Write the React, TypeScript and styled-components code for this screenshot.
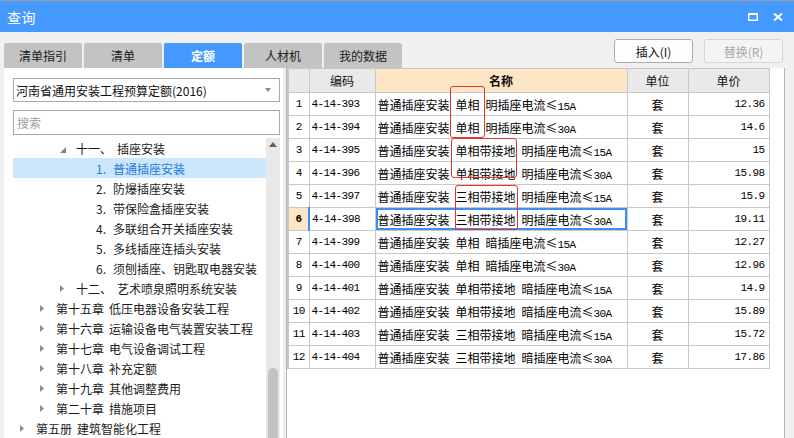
import React from 'react';
import styled, { createGlobalStyle } from 'styled-components';

const GlobalStyle = createGlobalStyle`
  html, body {
    margin: 0;
    padding: 0;
    background: #f0f0f0;
  }
  body {
    font-family: "Noto Sans CJK SC", "Liberation Sans", sans-serif;
    font-size: 12px;
    color: #000;
  }
`;

const MONO = '"Liberation Mono", "Noto Sans CJK SC", monospace';

type TreeNode = {
  level: number;
  kind: 'open' | 'closed' | 'leaf';
  label: string;
  name: string;
  selected?: boolean;
};

type Quota = {
  code: string;
  phase: string;
  mount: string;
  amp: string;
  price: string;
};

const tabs = ['清单指引', '清单', '定额', '人材机', '我的数据'];

const treeItems: TreeNode[] = [
  { level: 2, kind: 'open', label: '十一、', name: '插座安装' },
  { level: 3, kind: 'leaf', label: '1.', name: '普通插座安装', selected: true },
  { level: 3, kind: 'leaf', label: '2.', name: '防爆插座安装' },
  { level: 3, kind: 'leaf', label: '3.', name: '带保险盒插座安装' },
  { level: 3, kind: 'leaf', label: '4.', name: '多联组合开关插座安装' },
  { level: 3, kind: 'leaf', label: '5.', name: '多线插座连插头安装' },
  { level: 3, kind: 'leaf', label: '6.', name: '须刨插座、钥匙取电器安装' },
  { level: 2, kind: 'closed', label: '十二、', name: '艺术喷泉照明系统安装' },
  { level: 1, kind: 'closed', label: '第十五章', name: '低压电器设备安装工程' },
  { level: 1, kind: 'closed', label: '第十六章', name: '运输设备电气装置安装工程' },
  { level: 1, kind: 'closed', label: '第十七章', name: '电气设备调试工程' },
  { level: 1, kind: 'closed', label: '第十八章', name: '补充定额' },
  { level: 1, kind: 'closed', label: '第十九章', name: '其他调整费用' },
  { level: 1, kind: 'closed', label: '第二十章', name: '措施项目' },
  { level: 0, kind: 'closed', label: '第五册', name: '建筑智能化工程' }
];

const quotas: Quota[] = [
  { code: '4-14-393', phase: '单相', mount: '明', amp: '15A', price: '12.36' },
  { code: '4-14-394', phase: '单相', mount: '明', amp: '30A', price: '14.6' },
  { code: '4-14-395', phase: '单相带接地', mount: '明', amp: '15A', price: '15' },
  { code: '4-14-396', phase: '单相带接地', mount: '明', amp: '30A', price: '15.98' },
  { code: '4-14-397', phase: '三相带接地', mount: '明', amp: '15A', price: '15.9' },
  { code: '4-14-398', phase: '三相带接地', mount: '明', amp: '30A', price: '19.11' },
  { code: '4-14-399', phase: '单相', mount: '暗', amp: '15A', price: '12.27' },
  { code: '4-14-400', phase: '单相', mount: '暗', amp: '30A', price: '12.96' },
  { code: '4-14-401', phase: '单相带接地', mount: '暗', amp: '15A', price: '14.9' },
  { code: '4-14-402', phase: '单相带接地', mount: '暗', amp: '30A', price: '15.89' },
  { code: '4-14-403', phase: '三相带接地', mount: '暗', amp: '15A', price: '15.72' },
  { code: '4-14-404', phase: '三相带接地', mount: '暗', amp: '30A', price: '17.86' }
];

// red annotation boxes drawn over the grid (relative to the grid's top-left)
const marks = [
  { left: 163, top: 18, width: 35, height: 52 },
  { left: 164, top: 70, width: 66, height: 40 },
  { left: 168, top: 117, width: 63, height: 45 }
];

const Window = styled.div`
  width: 794px;
  height: 438px;
  box-sizing: border-box;
  border-top: 1px solid #9c9c9c;
  background: #f0f0f0;
  display: flex;
  flex-direction: column;
  overflow: hidden;
`;

const TitleBar = styled.div`
  flex: none;
  height: 31px;
  background: #4499ff;
  color: #fff;
  display: flex;
  align-items: center;
  justify-content: space-between;
  padding: 0 11px 0 7px;
`;

const Title = styled.span`
  font-size: 14px;
  letter-spacing: 0.5px;
`;

const WinControls = styled.div`
  display: flex;
  align-items: center;
  gap: 15px;
  padding-top: 1px;
`;

const Toolbar = styled.div`
  flex: none;
  height: 36px;
  display: flex;
  justify-content: space-between;
  padding: 0 11px 0 4px;
`;

const Tabs = styled.div`
  display: flex;
  align-self: flex-end;
  gap: 2px;
`;

const Tab = styled.div<{ $active?: boolean }>`
  width: 78px;
  height: 25px;
  box-sizing: border-box;
  display: flex;
  align-items: center;
  justify-content: center;
  border-radius: 2px 2px 0 0;
  background: ${p => (p.$active ? '#4499ff' : '#c3c3c3')};
  color: ${p => (p.$active ? '#fff' : '#1a1a1a')};
  font-weight: ${p => (p.$active ? 700 : 400)};
  font-size: 12px;
`;

const Actions = styled.div`
  display: flex;
  gap: 11px;
  padding-top: 7px;
`;

const Button = styled.div<{ $disabled?: boolean }>`
  width: 79px;
  height: 24px;
  box-sizing: border-box;
  display: flex;
  align-items: center;
  justify-content: center;
  border-radius: 3px;
  border: 1px solid ${p => (p.$disabled ? '#d6d6d6' : '#adadad')};
  background: ${p => (p.$disabled ? '#f4f4f4' : '#fdfdfd')};
  color: ${p => (p.$disabled ? '#a8a8a8' : '#111')};
  font-size: 12px;
`;

const Body = styled.div`
  flex: 1;
  min-height: 0;
  display: flex;
  gap: 3px;
  padding: 0 9px 0 4px;
`;

const LeftPanel = styled.div`
  width: 279px;
  flex: none;
  box-sizing: border-box;
  background: #fff;
  padding: 10px 3px 0 9px;
  display: flex;
  flex-direction: column;
`;

const Select = styled.div`
  height: 24px;
  box-sizing: border-box;
  border: 1px solid #a9a9a9;
  display: flex;
  align-items: center;
  justify-content: space-between;
  padding: 0 8px 0 2px;
  color: #111;
`;

const SelectArrow = styled.span`
  width: 0;
  height: 0;
  border-left: 3.5px solid transparent;
  border-right: 3.5px solid transparent;
  border-top: 4px solid #8a8a8a;
`;

const Search = styled.div`
  margin-top: 8px;
  height: 25px;
  box-sizing: border-box;
  border: 1px solid #a9a9a9;
  display: flex;
  align-items: center;
  padding-left: 3px;
  color: #a0a0a0;
`;

const TreeArea = styled.div`
  flex: 1;
  min-height: 0;
  margin-top: 3px;
  display: flex;
`;

const TreeList = styled.div`
  flex: 1;
  display: flex;
  flex-direction: column;
`;

const TreeRow = styled.div<{ $level: number; $selected?: boolean }>`
  height: 20px;
  flex: none;
  display: flex;
  align-items: center;
  padding-left: ${p => 7 + p.$level * 20}px;
  background: ${p => (p.$selected ? '#cce6fc' : 'transparent')};
  color: ${p => (p.$selected ? '#1f7ae0' : '#1a1a1a')};
  white-space: nowrap;
`;

const Toggle = styled.span`
  width: 16px;
  flex: none;
  display: flex;
  align-items: center;
`;

const NodeLabel = styled.span<{ $leaf?: boolean }>`
  ${p => (p.$leaf ? 'width: 17px;' : 'margin-right: 5px;')}
  flex: none;
`;

const ScrollBar = styled.div`
  width: 14px;
  flex: none;
  background: #e8e8e8;
  display: flex;
  flex-direction: column;
  align-items: center;
`;

const ScrollArrow = styled.span`
  margin-top: 4px;
  width: 0;
  height: 0;
  border-left: 4px solid transparent;
  border-right: 4px solid transparent;
  border-bottom: 5px solid #606060;
`;

const ScrollTrack = styled.div`
  flex: 1;
  width: 100%;
  display: flex;
  flex-direction: column;
  justify-content: flex-end;
  align-items: center;
`;

const ScrollThumb = styled.div`
  width: 10px;
  height: 72px;
  margin-bottom: -2px;
  border-radius: 5px 5px 0 0;
  background: #c2c2c2;
`;

const RightPanel = styled.div`
  flex: 1;
  box-sizing: border-box;
  background: #fff;
  border-left: 1px solid #b4b4b4;
  border-right: 1px solid #b4b4b4;
`;

const GridWrap = styled.div`
  position: relative;
  width: 481px;
`;

const Grid = styled.table`
  width: 481px;
  table-layout: fixed;
  border-collapse: collapse;
  border-left: 2px solid #c8c8c8;
`;

const HeadCell = styled.th<{ $accent?: boolean }>`
  height: 23px;
  padding: 0;
  border: 1px solid #c8c8c8;
  background: ${p => (p.$accent ? '#fde6c6' : '#e9e9e9')};
  font-weight: ${p => (p.$accent ? 700 : 400)};
  font-size: 12px;
  text-align: center;
  color: #111;
`;

const Cell = styled.td<{ $align?: 'left' | 'center' | 'right'; $mono?: boolean }>`
  height: 22px;
  padding: 0 ${p => (p.$align === 'right' ? '4px' : '0')} 0 ${p => (p.$align === 'left' ? '2px' : '0')};
  border: 1px solid #c8c8c8;
  text-align: ${p => p.$align || 'left'};
  font-family: ${p => (p.$mono ? MONO : 'inherit')};
  font-size: ${p => (p.$mono ? '11px' : '12px')};
  letter-spacing: ${p => (p.$mono ? '-0.6px' : '0')};
  white-space: nowrap;
  overflow: hidden;
`;

const RowHead = styled(Cell)<{ $current?: boolean }>`
  background: ${p => (p.$current ? '#fde6c6' : '#fff')};
  font-weight: ${p => (p.$current ? 700 : 400)};
  ${p => (p.$current ? 'border-right: 2px solid #3d8ef5;' : '')}
`;

const NameCell = styled(Cell)<{ $current?: boolean }>`
  padding-left: 2px;
  ${p => (p.$current ? 'box-shadow: inset 0 0 0 2px #3d8ef5;' : '')}
`;

const Amp = styled.span`
  font-family: ${MONO};
  font-size: 11px;
  letter-spacing: -0.6px;
`;

const Mark = styled.div`
  position: absolute;
  box-sizing: border-box;
  border: 1px solid #e5322d;
  border-radius: 3px;
  pointer-events: none;
`;

function ExpandedIcon() {
  return (
    <svg width="6" height="6" viewBox="0 0 6 6" style={{ marginTop: 3 }}>
      <polygon points="6,0 6,6 0,6" fill="#808080" />
    </svg>
  );
}

function CollapsedIcon() {
  return (
    <svg width="4" height="7" viewBox="0 0 4 7">
      <polygon points="0,0 4,3.5 0,7" fill="#8c8c8c" />
    </svg>
  );
}

function Tree() {
  return (
    <TreeList>
      {treeItems.map((node, index) => (
        <TreeRow
          key={`node-${index}`}
          $level={node.level}
          $selected={node.selected}
        >
          {node.kind !== 'leaf' && (
            <Toggle>
              {node.kind === 'open' ? <ExpandedIcon /> : <CollapsedIcon />}
            </Toggle>
          )}
          {node.kind === 'leaf' && <Toggle />}
          <NodeLabel $leaf={node.kind === 'leaf'}>{node.label}</NodeLabel>
          <span>{node.name}</span>
        </TreeRow>
      ))}
    </TreeList>
  );
}

function QuotaGrid() {
  const current = 5;
  return (
    <GridWrap>
      <Grid>
        <colgroup>
          <col style={{ width: 21 }} />
          <col style={{ width: 66 }} />
          <col style={{ width: 252 }} />
          <col style={{ width: 61 }} />
          <col style={{ width: 81 }} />
        </colgroup>
        <thead>
          <tr>
            <HeadCell />
            <HeadCell>编码</HeadCell>
            <HeadCell $accent>名称</HeadCell>
            <HeadCell>单位</HeadCell>
            <HeadCell>单价</HeadCell>
          </tr>
        </thead>
        <tbody>
          {quotas.map((q, index) => (
            <tr key={q.code}>
              <RowHead $align="center" $mono $current={index === current}>
                {index + 1}
              </RowHead>
              <Cell $align="left" $mono>
                {q.code}
              </Cell>
              <NameCell $current={index === current}>
                {`普通插座安装\u2002${q.phase}\u2002${q.mount}插座电流≤`}
                <Amp>{q.amp}</Amp>
              </NameCell>
              <Cell $align="center">套</Cell>
              <Cell $align="right" $mono>
                {q.price}
              </Cell>
            </tr>
          ))}
        </tbody>
      </Grid>
      {marks.map((m, i) => (
        <Mark
          key={`mark-${i}`}
          style={{ left: m.left, top: m.top, width: m.width, height: m.height }}
        />
      ))}
    </GridWrap>
  );
}

export default function App() {
  return (
    <>
      <GlobalStyle />
      <Window>
        <TitleBar>
          <Title>查询</Title>
          <WinControls>
            <svg width="10" height="8" viewBox="0 0 10 8">
              <rect x="0.75" y="1" width="8.5" height="6.25" fill="none" stroke="#fff" strokeWidth="1.5" />
              <rect x="0" y="0" width="10" height="2" fill="#fff" />
            </svg>
            <svg width="10" height="8" viewBox="0 0 10 8">
              <path d="M1 0.5 L9 7.5 M9 0.5 L1 7.5" stroke="#fff" strokeWidth="2" />
            </svg>
          </WinControls>
        </TitleBar>
        <Toolbar>
          <Tabs>
            {tabs.map(t => (
              <Tab key={t} $active={t === '定额'}>
                {t}
              </Tab>
            ))}
          </Tabs>
          <Actions>
            <Button>插入(I)</Button>
            <Button $disabled>替换(R)</Button>
          </Actions>
        </Toolbar>
        <Body>
          <LeftPanel>
            <Select>
              <span>河南省通用安装工程预算定额(2016)</span>
              <SelectArrow />
            </Select>
            <Search>搜索</Search>
            <TreeArea>
              <Tree />
              <ScrollBar>
                <ScrollArrow />
                <ScrollTrack>
                  <ScrollThumb />
                </ScrollTrack>
              </ScrollBar>
            </TreeArea>
          </LeftPanel>
          <RightPanel>
            <QuotaGrid />
          </RightPanel>
        </Body>
      </Window>
    </>
  );
}
